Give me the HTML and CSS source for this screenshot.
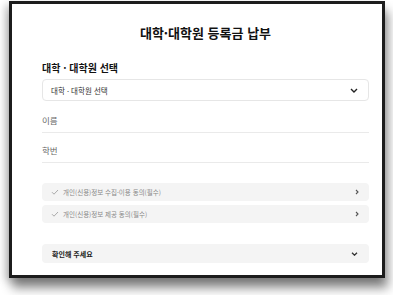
FILE: index.html
```html
<!DOCTYPE html>
<html lang="ko">
<head>
    <meta charset="UTF-8">
    <meta name="viewport" content="width=device-width, initial-scale=1.0">
    <title>대학·대학원 등록금 납부</title>
    <link rel="stylesheet" href="styles.css">
</head>
<body>
    <div class="frame">
        <h1 class="title">대학·대학원 등록금 납부</h1>

        <div class="label">대학 · 대학원 선택</div>
        <div class="select">
            <span>대학 · 대학원 선택</span>
            <svg class="chev" width="8" height="5" viewBox="0 0 8 5"><path d="M1 1l3 3 3-3" fill="none" stroke="#222" stroke-width="1.4"/></svg>
        </div>

        <div class="field first">이름</div>
        <div class="field">학번</div>

        <!-- 약관 동의 -->
        <div class="agree">
            <div class="agree-row">
                <svg class="check" width="8" height="6" viewBox="0 0 8 6"><path d="M1 3.2l2 2L7 1" fill="none" stroke="#aaa" stroke-width="1"/></svg>
                <span>개인(신용)정보 수집·이용 동의(필수)</span>
                <svg class="arrow" width="4" height="6" viewBox="0 0 4 6"><path d="M1 1l2 2-2 2" fill="none" stroke="#555" stroke-width="1.1"/></svg>
            </div>
            <div class="agree-row">
                <svg class="check" width="8" height="6" viewBox="0 0 8 6"><path d="M1 3.2l2 2L7 1" fill="none" stroke="#aaa" stroke-width="1"/></svg>
                <span>개인(신용)정보 제공 동의(필수)</span>
                <svg class="arrow" width="4" height="6" viewBox="0 0 4 6"><path d="M1 1l2 2-2 2" fill="none" stroke="#555" stroke-width="1.1"/></svg>
            </div>
        </div>

        <div class="confirm">
            <span>확인해 주세요</span>
            <svg class="chev" width="7" height="4" viewBox="0 0 7 4"><path d="M1 .8l2.5 2.4L6 .8" fill="none" stroke="#333" stroke-width="1.3"/></svg>
        </div>
    </div>
</body>
</html>
```

FILE: styles.css
```css
body {
    margin: 0;
    height: 295px;
    overflow: hidden;
    background: #fff;
    font-family: "Noto Sans CJK KR", "Noto Sans", sans-serif;
    color: #222;
}

/* Window frame with shadow */
.frame {
    box-sizing: border-box;
    margin: 1px 0 0 9px;
    width: 376px;
    height: 277px;
    border: 3px solid #1c1c1c;
    background: #fff;
    padding: 19px 13px 0 30px;
    box-shadow: 3px 10px 10px rgba(0, 0, 0, 0.45), -4px 3px 8px rgba(0, 0, 0, 0.2);
}

.title {
    margin: 0;
    text-align: center;
    font-size: 13px;
    font-weight: 700;
    line-height: 20px;
    color: #111;
}

.label {
    margin-top: 18px;
    font-size: 10px;
    font-weight: 700;
    line-height: 14px;
    color: #111;
}

.select {
    margin-top: 4px;
    height: 22px;
    box-sizing: border-box;
    border: 1px solid #e6e6e6;
    border-radius: 4px;
    display: flex;
    align-items: center;
    justify-content: space-between;
    padding: 0 10px 0 8px;
    font-size: 7.5px;
    color: #333;
}

.field {
    height: 30px;
    box-sizing: border-box;
    border-bottom: 1px solid #eaeaea;
    display: flex;
    align-items: flex-end;
    padding-bottom: 6px;
    font-size: 8.5px;
    color: #666;
}

.field.first {
    height: 32px;
}

.agree {
    margin-top: 20px;
    display: flex;
    flex-direction: column;
    gap: 4px;
}

.agree-row {
    height: 18px;
    background: #f4f4f4;
    border-radius: 4px;
    display: flex;
    align-items: center;
    padding: 0 10px 0 7px;
    font-size: 6.5px;
    color: #888;
}

.agree-row span {
    flex: 1;
    margin-left: 4px;
}

.check {
    margin-left: 2px;
}

.confirm {
    margin-top: 21px;
    height: 19px;
    background: #f4f4f4;
    border-radius: 4px;
    display: flex;
    align-items: center;
    justify-content: space-between;
    padding: 0 11px 0 10px;
    font-size: 7px;
    font-weight: 700;
    color: #222;
}
```
